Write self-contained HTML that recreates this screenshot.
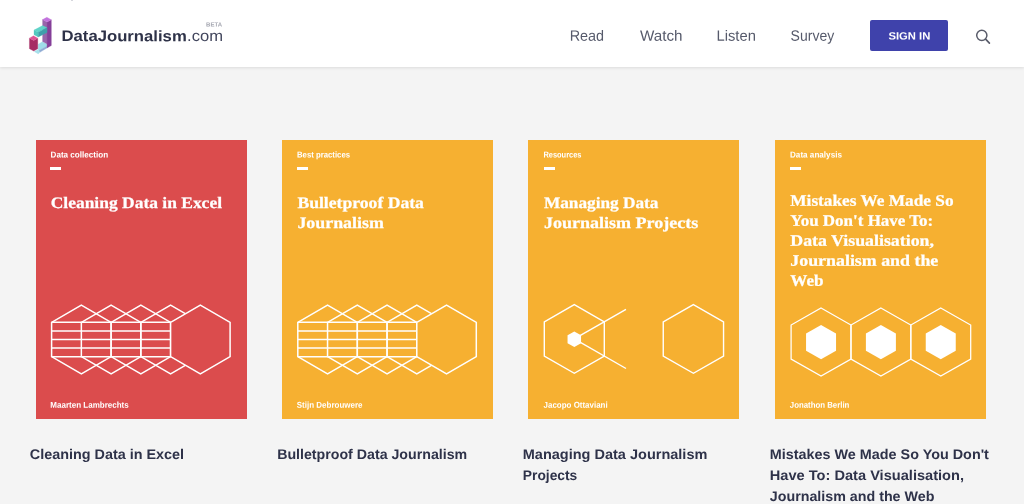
<!DOCTYPE html>
<html lang="en"><head><meta charset="utf-8"><title>DataJournalism.com</title>
<style>
html,body{margin:0;padding:0}
body{width:1024px;height:504px;overflow:hidden;background:#f4f4f4;position:relative;font-family:"Liberation Sans",sans-serif;color:#2e3249}
.t{position:absolute;left:0;top:0;white-space:nowrap;line-height:1;margin:0;padding:0;transform-origin:0 0}
.sf{font-family:"Liberation Serif",serif;-webkit-text-stroke:.25px #fff}
.b{font-weight:bold}
#hdr{position:absolute;left:0;top:0;width:1024px;height:67px;background:#fff;box-shadow:0 1px 3px rgba(0,0,0,.1)}
.card{position:absolute;top:139.8px;width:210.8px;height:279.4px}
.dash{position:absolute;top:166.9px;width:11px;height:3.1px;background:#fff}
#btn{position:absolute;left:869.6px;top:20.1px;width:78.5px;height:31.2px;background:#3f42ab;border-radius:2px}
#art{position:absolute;left:0;top:0}
</style></head><body>

<div id="hdr"></div>
<div style="position:absolute;left:71px;top:-1px;width:2.2px;height:2.4px;border-radius:1px;background:#c9cad2"></div>
<svg id="logo" style="position:absolute;left:24px;top:12px" width="36" height="48" viewBox="0 0 378 504">
<g stroke-width="3" stroke-linejoin="round">
<!-- floor -->
<polygon points="149.5,338 192,313 242,336 242,356 157,405 149.5,400" fill="#a0dde9" stroke="#a0dde9"/>
<polygon points="157,405 242,356 242,378 167,423 157,418" fill="#90acd4" stroke="#90acd4"/>
<polygon points="107,415 149.5,393 167,423 149.5,441" fill="#a6e0ea" stroke="#a6e0ea"/>
<!-- purple pillar -->
<polygon points="195,80 242,105 242,336 195,311" fill="#9865ab" stroke="#9865ab"/>
<polygon points="242,105 287,82 287,352 242,378" fill="#853f99" stroke="#853f99"/>
<polygon points="195,80 240,55 287,82 242,105" fill="#c273dd" stroke="#c273dd"/>
<!-- teal bar -->
<polygon points="105,190 195,143 242,165 150,213" fill="#5fd3c8" stroke="#5fd3c8"/>
<polygon points="105,190 150,213 150,262 105,238" fill="#52c9bf" stroke="#52c9bf"/>
<polygon points="150,213 242,165 242,215 150,262" fill="#3f9fab" stroke="#3f9fab"/>
<!-- magenta block -->
<polygon points="57,275 102,300 144.5,275 144.5,385 102,410 57,385" fill="#a62c64" stroke="#a62c64"/>
<polygon points="57,275 99.5,250 144.5,275 102,300" fill="#dc5493" stroke="#dc5493"/>
</g>
</svg>

<div id="btn"></div>
<svg style="position:absolute;left:972px;top:26px" width="22" height="22" viewBox="0 0 22 22"><circle cx="9.8" cy="9.3" r="5.1" fill="none" stroke="#5a5d6b" stroke-width="1.5"/><line x1="13.6" y1="13.2" x2="17.4" y2="17.1" stroke="#5a5d6b" stroke-width="1.7" stroke-linecap="round"/></svg>
<div class="card" style="left:35.8px;width:210.75px;background:#db4c4d"></div>
<div class="dash" style="left:50.1px"></div>
<div class="card" style="left:282.0px;width:211.2px;background:#f6b031"></div>
<div class="dash" style="left:297.0px"></div>
<div class="card" style="left:528.4px;width:210.8px;background:#f6b031"></div>
<div class="dash" style="left:543.5px"></div>
<div class="card" style="left:774.8px;width:210.9px;background:#f6b031"></div>
<div class="dash" style="left:790.1px"></div>
<svg id="art" width="1024" height="504" viewBox="0 0 1024 504">
<polygon points="81.35,305.15 111.10,322.32 111.10,356.68 81.35,373.85 51.60,356.68 51.60,322.32" fill="none" stroke="#fff" stroke-width="1.5"/>
<polygon points="111.10,305.15 140.85,322.32 140.85,356.68 111.10,373.85 81.35,356.68 81.35,322.32" fill="none" stroke="#fff" stroke-width="1.5"/>
<polygon points="140.85,305.15 170.60,322.32 170.60,356.68 140.85,373.85 111.10,356.68 111.10,322.32" fill="none" stroke="#fff" stroke-width="1.5"/>
<polygon points="170.60,305.15 200.35,322.32 200.35,356.68 170.60,373.85 140.85,356.68 140.85,322.32" fill="none" stroke="#fff" stroke-width="1.5"/>
<line x1="51.60" y1="322.32" x2="170.60" y2="322.32" stroke="#fff" stroke-width="1.5"/>
<line x1="51.60" y1="330.91" x2="170.60" y2="330.91" stroke="#fff" stroke-width="1.5"/>
<line x1="51.60" y1="339.50" x2="170.60" y2="339.50" stroke="#fff" stroke-width="1.5"/>
<line x1="51.60" y1="348.09" x2="170.60" y2="348.09" stroke="#fff" stroke-width="1.5"/>
<line x1="51.60" y1="356.68" x2="170.60" y2="356.68" stroke="#fff" stroke-width="1.5"/>
<polygon points="200.35,305.15 230.10,322.32 230.10,356.68 200.35,373.85 170.60,356.68 170.60,322.32" fill="#db4c4d" stroke="#fff" stroke-width="1.5"/>
<polygon points="327.55,305.15 357.30,322.32 357.30,356.68 327.55,373.85 297.80,356.68 297.80,322.32" fill="none" stroke="#fff" stroke-width="1.5"/>
<polygon points="357.30,305.15 387.05,322.32 387.05,356.68 357.30,373.85 327.55,356.68 327.55,322.32" fill="none" stroke="#fff" stroke-width="1.5"/>
<polygon points="387.05,305.15 416.80,322.32 416.80,356.68 387.05,373.85 357.30,356.68 357.30,322.32" fill="none" stroke="#fff" stroke-width="1.5"/>
<polygon points="416.80,305.15 446.55,322.32 446.55,356.68 416.80,373.85 387.05,356.68 387.05,322.32" fill="none" stroke="#fff" stroke-width="1.5"/>
<line x1="297.80" y1="322.32" x2="416.80" y2="322.32" stroke="#fff" stroke-width="1.5"/>
<line x1="297.80" y1="330.91" x2="416.80" y2="330.91" stroke="#fff" stroke-width="1.5"/>
<line x1="297.80" y1="339.50" x2="416.80" y2="339.50" stroke="#fff" stroke-width="1.5"/>
<line x1="297.80" y1="348.09" x2="416.80" y2="348.09" stroke="#fff" stroke-width="1.5"/>
<line x1="297.80" y1="356.68" x2="416.80" y2="356.68" stroke="#fff" stroke-width="1.5"/>
<polygon points="446.55,305.15 476.30,322.32 476.30,356.68 446.55,373.85 416.80,356.68 416.80,322.32" fill="#f6b031" stroke="#fff" stroke-width="1.5"/>
<polygon points="574.30,304.65 604.30,321.80 604.30,356.10 574.30,373.25 544.30,356.10 544.30,321.80" fill="none" stroke="#fff" stroke-width="1.4"/>
<line x1="574.30" y1="338.95" x2="626.00" y2="309.39" stroke="#fff" stroke-width="1.4"/>
<line x1="574.30" y1="338.95" x2="626.00" y2="368.51" stroke="#fff" stroke-width="1.4"/>
<polygon points="574.30,331.45 581.05,335.35 581.05,343.15 574.30,347.05 567.55,343.15 567.55,335.35" fill="#fff"/>
<polygon points="693.40,304.65 723.55,321.80 723.55,356.10 693.40,373.25 663.25,356.10 663.25,321.80" fill="none" stroke="#fff" stroke-width="1.4"/>
<polygon points="821.05,308.05 851.00,325.05 851.00,359.05 821.05,376.05 791.10,359.05 791.10,325.05" fill="none" stroke="#fff" stroke-width="1.25"/>
<polygon points="821.05,324.95 836.05,333.55 836.05,350.75 821.05,359.35 806.05,350.75 806.05,333.55" fill="#fff"/>
<polygon points="880.90,308.05 910.85,325.05 910.85,359.05 880.90,376.05 850.95,359.05 850.95,325.05" fill="none" stroke="#fff" stroke-width="1.25"/>
<polygon points="880.90,324.95 895.90,333.55 895.90,350.75 880.90,359.35 865.90,350.75 865.90,333.55" fill="#fff"/>
<polygon points="940.75,308.05 970.70,325.05 970.70,359.05 940.75,376.05 910.80,359.05 910.80,325.05" fill="none" stroke="#fff" stroke-width="1.25"/>
<polygon points="940.75,324.95 955.75,333.55 955.75,350.75 940.75,359.35 925.75,350.75 925.75,333.55" fill="#fff"/>
</svg>
<div id="txt" style="position:absolute;left:0;top:0;width:1024px;height:504px;will-change:transform">
<div class="t b" id="lg1" style="font-size:15.3px;color:#2e3248;transform:translate(61.51px,28.10px) scaleX(1.0913) rotate(.04deg)">DataJournalism</div>
<div class="t" id="lg2" style="font-size:15.3px;color:#41455c;transform:translate(187.12px,28.10px) scaleX(1.0826) rotate(.04deg)">.com</div>
<div class="t b" id="beta" style="font-size:6px;color:#a6a8b2;transform:translate(206.10px,21.41px) scaleX(1.0088) rotate(.04deg)">BETA</div>
<div class="t" id="nav0" style="font-size:15px;color:#565a6b;transform:translate(569.64px,27.80px) scaleX(0.9604) rotate(.04deg)">Read</div>
<div class="t" id="nav1" style="font-size:15px;color:#565a6b;transform:translate(640.00px,27.80px) scaleX(1.0142) rotate(.04deg)">Watch</div>
<div class="t" id="nav2" style="font-size:15px;color:#565a6b;transform:translate(716.52px,27.80px) scaleX(0.9823) rotate(.04deg)">Listen</div>
<div class="t" id="nav3" style="font-size:15px;color:#565a6b;transform:translate(790.60px,27.80px) scaleX(0.9346) rotate(.04deg)">Survey</div>
<div class="t b" id="sgn" style="font-size:10.5px;color:#fff;transform:translate(888.40px,30.60px) scaleX(1.0726) rotate(.04deg)">SIGN IN</div>
<div class="t b" id="lab0" style="font-size:8.5px;color:#fff;transform:translate(50.60px,150.40px) scaleX(0.9508) rotate(.04deg)">Data collection</div>
<div class="t sf b" id="ttl0_0" style="font-size:16px;color:#fff;transform:translate(50.70px,195.00px) scaleX(1.0918) rotate(.04deg)">Cleaning Data in Excel</div>
<div class="t b" id="auth0" style="font-size:8.5px;color:#fff;transform:translate(50.30px,400.70px) scaleX(0.9435) rotate(.04deg)">Maarten Lambrechts</div>
<div class="t b" id="bt0_0" style="font-size:14px;color:#2e3249;transform:translate(29.80px,446.90px) scaleX(1.0270) rotate(.04deg)">Cleaning Data in Excel</div>
<div class="t b" id="lab1" style="font-size:8.5px;color:#fff;transform:translate(297.00px,150.40px) scaleX(0.9129) rotate(.04deg)">Best practices</div>
<div class="t sf b" id="ttl1_0" style="font-size:16px;color:#fff;transform:translate(297.40px,195.00px) scaleX(1.1018) rotate(.04deg)">Bulletproof Data</div>
<div class="t sf b" id="ttl1_1" style="font-size:16px;color:#fff;transform:translate(297.40px,215.00px) scaleX(1.1177) rotate(.04deg)">Journalism</div>
<div class="t b" id="auth1" style="font-size:8.5px;color:#fff;transform:translate(296.80px,400.70px) scaleX(0.9398) rotate(.04deg)">Stijn Debrouwere</div>
<div class="t b" id="bt1_0" style="font-size:14px;color:#2e3249;transform:translate(277.20px,446.90px) scaleX(1.0133) rotate(.04deg)">Bulletproof Data Journalism</div>
<div class="t b" id="lab2" style="font-size:8.5px;color:#fff;transform:translate(543.40px,150.40px) scaleX(0.8756) rotate(.04deg)">Resources</div>
<div class="t sf b" id="ttl2_0" style="font-size:16px;color:#fff;transform:translate(543.90px,195.00px) scaleX(1.0788) rotate(.04deg)">Managing Data</div>
<div class="t sf b" id="ttl2_1" style="font-size:16px;color:#fff;transform:translate(543.90px,215.00px) scaleX(1.1266) rotate(.04deg)">Journalism Projects</div>
<div class="t b" id="auth2" style="font-size:8.5px;color:#fff;transform:translate(543.60px,400.70px) scaleX(0.9350) rotate(.04deg)">Jacopo Ottaviani</div>
<div class="t b" id="bt2_0" style="font-size:14px;color:#2e3249;transform:translate(522.80px,446.90px) scaleX(1.0360) rotate(.04deg)">Managing Data Journalism</div>
<div class="t b" id="bt2_1" style="font-size:14px;color:#2e3249;transform:translate(522.80px,467.90px) scaleX(0.9863) rotate(.04deg)">Projects</div>
<div class="t b" id="lab3" style="font-size:8.5px;color:#fff;transform:translate(790.00px,150.40px) scaleX(0.9559) rotate(.04deg)">Data analysis</div>
<div class="t sf b" id="ttl3_0" style="font-size:16px;color:#fff;transform:translate(790.30px,192.70px) scaleX(1.0795) rotate(.04deg)">Mistakes We Made So</div>
<div class="t sf b" id="ttl3_1" style="font-size:16px;color:#fff;transform:translate(790.30px,212.70px) scaleX(1.0609) rotate(.04deg)">You Don't Have To:</div>
<div class="t sf b" id="ttl3_2" style="font-size:16px;color:#fff;transform:translate(790.30px,232.70px) scaleX(1.1145) rotate(.04deg)">Data Visualisation,</div>
<div class="t sf b" id="ttl3_3" style="font-size:16px;color:#fff;transform:translate(790.30px,252.70px) scaleX(1.1173) rotate(.04deg)">Journalism and the</div>
<div class="t sf b" id="ttl3_4" style="font-size:16px;color:#fff;transform:translate(790.30px,272.70px) scaleX(1.0667) rotate(.04deg)">Web</div>
<div class="t b" id="auth3" style="font-size:8.5px;color:#fff;transform:translate(789.80px,400.70px) scaleX(0.9209) rotate(.04deg)">Jonathon Berlin</div>
<div class="t b" id="bt3_0" style="font-size:14px;color:#2e3249;transform:translate(769.80px,446.90px) scaleX(1.0268) rotate(.04deg)">Mistakes We Made So You Don't</div>
<div class="t b" id="bt3_1" style="font-size:14px;color:#2e3249;transform:translate(769.80px,467.90px) scaleX(1.0431) rotate(.04deg)">Have To: Data Visualisation,</div>
<div class="t b" id="bt3_2" style="font-size:14px;color:#2e3249;transform:translate(769.80px,488.90px) scaleX(1.0187) rotate(.04deg)">Journalism and the Web</div>
</div>
</body></html>
